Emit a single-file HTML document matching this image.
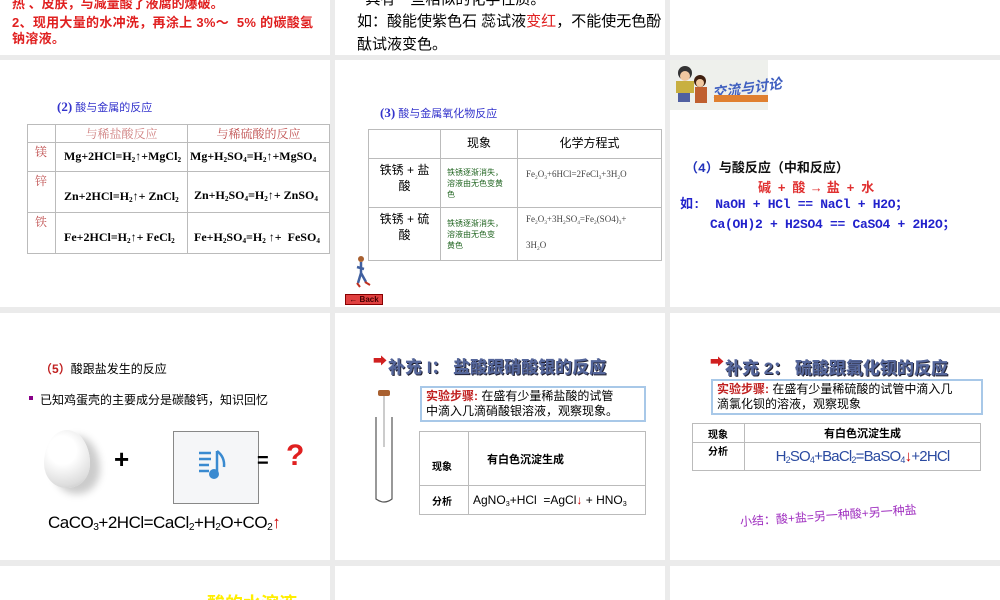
<!DOCTYPE html>
<html><head><meta charset="utf-8"><style>
*{margin:0;padding:0;box-sizing:border-box}
body{width:1000px;height:600px;background:#ebebeb;position:relative;overflow:hidden;font-family:"Liberation Sans","Noto Sans CJK SC",sans-serif}
.s{position:absolute;background:#fff;overflow:hidden}
.a{position:absolute;white-space:nowrap}
table{border-collapse:collapse;position:absolute}
td{border:1px solid #bbb}
.ser{font-family:"Liberation Serif","Noto Serif CJK SC",serif}
.mono{font-family:"Liberation Mono","Noto Sans CJK SC",monospace}
sub{font-size:60%;vertical-align:-2px}
.tt{font-weight:900;color:#55669a;font-size:17px;text-shadow:1px 1px 0 #223,-1px 0 0 #fff}
</style></head><body>
<!-- row 0 -->
<div class="s" style="left:0;top:0;width:330px;height:55px">
<div class="a" style="left:12px;top:-7px;color:#e02020;font-size:13px;font-weight:bold">热 、皮肤，与减量酸了液腐的爆破。</div>
<div class="a" style="left:12px;top:15px;color:#e02020;font-size:13px;font-weight:bold;line-height:16px;letter-spacing:0.3px">2、现用大量的水冲洗，再涂上 3%～&nbsp; 5% 的碳酸氢<br>钠溶液。</div>
</div>
<div class="s" style="left:335px;top:0;width:330px;height:55px">
<div class="a" style="left:22px;top:-12px;font-size:15px">&nbsp; 具有一些相似的化学性质。</div>
<div class="a" style="left:22px;top:10px;font-size:15px;line-height:23px">如：酸能使紫色石 蕊试液<span style="color:#e02020">变红</span>，不能使无色酚<br>酞试液变色。</div>
</div>
<div class="s" style="left:670px;top:0;width:330px;height:55px"></div>

<!-- row 1 -->
<div class="s" style="left:0;top:60px;width:330px;height:247px">
<div class="a" style="left:57px;top:39px;color:#3333cc;font-size:11px"><b style="font-size:13px" class="ser">(2)</b> 酸与金属的反应</div>
<table class="ser" style="left:27px;top:64px;width:303px;height:130px;border:1px solid #888;font-size:12px;font-weight:bold">
<tr style="height:18px"><td style="width:28px"></td><td style="width:132px;color:#d08080;font-weight:normal;text-align:center;font-size:12px">与稀盐酸反应</td><td style="color:#c05050;font-weight:normal;text-align:center;font-size:12px">与稀硫酸的反应</td></tr>
<tr><td style="color:#c05050;font-weight:normal;vertical-align:top;padding-left:7px">镁</td><td style="padding-left:8px">Mg+2HCl=H<sub>2</sub>↑+MgCl<sub>2</sub></td><td style="padding-left:2px">Mg+H<sub>2</sub>SO<sub>4</sub>=H<sub>2</sub>↑+MgSO<sub>4</sub></td></tr>
<tr><td style="color:#c05050;font-weight:normal;vertical-align:top;padding-left:7px">锌</td><td style="padding-left:8px;padding-top:10px">Zn+2HCl=H<sub>2</sub>↑+ ZnCl<sub>2</sub></td><td style="padding-left:6px;padding-top:8px">Zn+H<sub>2</sub>SO<sub>4</sub>=H<sub>2</sub>↑+ ZnSO<sub>4</sub></td></tr>
<tr><td style="color:#c05050;font-weight:normal;vertical-align:top;padding-left:7px">铁</td><td style="padding-left:8px;padding-top:10px">Fe+2HCl=H<sub>2</sub>↑+ FeCl<sub>2</sub></td><td style="padding-left:6px;padding-top:10px">Fe+H<sub>2</sub>SO<sub>4</sub>=H<sub>2</sub> ↑+&nbsp; FeSO<sub>4</sub></td></tr>
</table>
</div>
<div class="s" style="left:335px;top:60px;width:330px;height:247px">
<div class="a" style="left:45px;top:45px;color:#3333cc;font-size:11px"><b style="font-size:13px" class="ser">(3)</b> 酸与金属氧化物反应</div>
<table style="left:33px;top:69px;width:294px;height:127px;border:1px solid #888;font-size:12px">
<tr style="height:29px"><td style="width:72px"></td><td style="width:77px;text-align:center;vertical-align:top;padding-top:4px">现象</td><td style="text-align:center;vertical-align:top;padding-top:4px">化学方程式</td></tr>
<tr style="height:49px"><td style="text-align:center;vertical-align:top;line-height:16px;padding-top:3px">铁锈 + 盐<br>酸</td><td style="font-size:8px;color:#226622;padding-left:6px;line-height:11px">铁锈逐渐消失，<br>溶液由无色变黄<br>色</td><td class="ser" style="font-size:9px;color:#444;padding-left:8px;vertical-align:top;padding-top:10px">Fe<sub>2</sub>O<sub>3</sub>+6HCl=2FeCl<sub>3</sub>+3H<sub>2</sub>O</td></tr>
<tr><td style="text-align:center;vertical-align:top;line-height:16px;padding-top:3px">铁锈 + 硫<br>酸</td><td style="font-size:8px;color:#226622;padding-left:6px;line-height:11px">铁锈逐渐消失，<br>溶液由无色变<br>黄色</td><td class="ser" style="font-size:9px;color:#444;padding-left:8px;line-height:22px">Fe<sub>2</sub>O<sub>3</sub>+3H<sub>2</sub>SO<sub>4</sub>=Fe<sub>2</sub>(SO4)<sub>3</sub>+<br>3H<sub>2</sub>O</td></tr>
</table>
<svg class="a" style="left:15px;top:195px" width="22" height="34"><circle cx="11" cy="4" r="3" fill="#a86030"/><path d="M11 7 L11 18 M7 12 L14 14 M11 18 L8 28 M11 18 L16 27" stroke="#4060a0" stroke-width="2.5" fill="none"/><path d="M7 28 L10 32 M15 27 L20 30" stroke="#c03020" stroke-width="2"/></svg>
<div class="a" style="left:10px;top:234px;width:38px;height:11px;background:#e04040;border:1px solid #800;color:#400;font-size:8px;font-weight:bold;line-height:9px;text-align:center">← Back</div>
</div>
<div class="s" style="left:670px;top:60px;width:330px;height:247px">
<div class="a" style="left:0;top:0;width:98px;height:50px;background:#eef0ec"></div>
<svg class="a" style="left:2px;top:4px" width="40" height="44"><circle cx="13" cy="9" r="7" fill="#333"/><circle cx="13" cy="12" r="5" fill="#f0c8a0"/><rect x="4" y="17" width="18" height="12" fill="#c8b040"/><rect x="6" y="29" width="12" height="9" fill="#5060a0"/><circle cx="28" cy="17" r="6" fill="#402010"/><circle cx="28" cy="19" r="4" fill="#f0c8a0"/><rect x="23" y="23" width="12" height="16" fill="#c06030"/></svg>
<div class="a" style="left:42px;top:18px;font-size:14px;font-weight:bold;color:#4060c0;font-style:italic;transform:rotate(-8deg)">交流与讨论</div>
<div class="a" style="left:44px;top:35px;width:54px;height:7px;background:#e08030"></div>
<div class="a mono" style="left:15px;top:97px;font-size:13px;font-weight:bold;color:#111"><span style="color:#2233bb">（4）</span>与酸反应（中和反应）</div>
<div class="a mono" style="left:88px;top:117px;font-size:13px;font-weight:bold;color:#e03030;letter-spacing:-0.5px">碱 + 酸 → 盐 + 水</div>
<div class="a mono" style="left:10px;top:135px;font-size:13px;font-weight:bold;color:#2222cc;line-height:20px;letter-spacing:-0.3px">如:&nbsp; NaOH + HCl == NaCl + H2O；<br>&nbsp;&nbsp;&nbsp; Ca(OH)2 + H2SO4 == CaSO4 + 2H2O；</div>
</div>

<!-- row 2 -->
<div class="s" style="left:0;top:313px;width:330px;height:247px">
<div class="a" style="left:40px;top:47px;font-size:12px"><span style="color:#c02020;font-weight:bold">（5）</span>酸跟盐发生的反应</div>
<div class="a" style="left:29px;top:83px;width:4px;height:4px;background:#880088"></div>
<div class="a" style="left:40px;top:78px;font-size:12px">已知鸡蛋壳的主要成分是碳酸钙，知识回忆</div>
<div class="a" style="left:44px;top:117px;width:46px;height:58px;border-radius:50% 50% 48% 48%/58% 58% 42% 42%;background:radial-gradient(circle at 40% 35%,#fff 30%,#ddd 75%,#bbb);box-shadow:10px 6px 8px #ccc"></div>
<div class="a" style="left:114px;top:131px;font-size:26px;font-weight:bold">+</div>
<div class="a" style="left:173px;top:118px;width:86px;height:73px;border:1px solid #888;background:#f5f6f8"></div>
<svg class="a" style="left:195px;top:134px" width="40" height="40"><path d="M4 6h12M4 12h12M4 18h10M4 24h10" stroke="#3a8ad0" stroke-width="2.5"/><path d="M22 4v22" stroke="#3a8ad0" stroke-width="2.5"/><circle cx="19" cy="27" r="5" fill="#3a8ad0"/><path d="M22 4q8 6 7 16" stroke="#3a8ad0" stroke-width="2.5" fill="none"/></svg>
<div class="a" style="left:257px;top:137px;font-size:20px;font-weight:bold">=</div>
<div class="a" style="left:286px;top:126px;font-size:30px;font-weight:bold;color:#e02020">?</div>
<div class="a" style="left:48px;top:200px;font-size:17px;letter-spacing:-0.5px">CaCO<sub>3</sub>+2HCl=CaCl<sub>2</sub>+H<sub>2</sub>O+CO<sub>2</sub><span style="color:#c00">↑</span></div>
</div>
<div class="s" style="left:335px;top:313px;width:330px;height:247px">
<div class="a" style="left:38px;top:38px;color:#d02020;font-size:14px">➡</div>
<div class="a tt" style="left:53px;top:40px">补充 I： 盐酸跟硝酸银的反应</div>
<svg class="a" style="left:38px;top:74px" width="22" height="120"><rect x="5" y="3" width="12" height="6" rx="2" fill="#a86030"/><path d="M11 9 L11 60" stroke="#999" stroke-width="1"/><path d="M3 30 V112 Q11 118 19 112 V30" stroke="#555" stroke-width="1.2" fill="none"/></svg>
<div class="a" style="left:85px;top:73px;width:226px;height:36px;border:2px solid #a8c8e8;font-size:12px;line-height:15px;padding:1px 4px"><b style="color:#c02020">实验步骤:</b> 在盛有少量稀盐酸的试管<br>中滴入几滴硝酸银溶液，观察现象。</div>
<table style="left:84px;top:118px;width:227px;height:84px;border:1px solid #888">
<tr><td style="width:49px;font-size:10px;font-weight:bold;padding:14px 0 0 12px">现象</td><td style="font-size:11px;font-weight:bold;padding-left:18px">有白色沉淀生成</td></tr>
<tr><td style="font-size:10px;font-weight:bold;padding-left:12px">分析</td><td style="font-size:12px;padding-left:4px">AgNO<sub>3</sub>+HCl&nbsp; =AgCl<span style="color:#c00">↓</span> + HNO<sub>3</sub></td></tr>
</table>
</div>
<div class="s" style="left:670px;top:313px;width:330px;height:247px">
<div class="a" style="left:40px;top:39px;color:#d02020;font-size:14px">➡</div>
<div class="a tt" style="left:55px;top:41px">补充 2： 硫酸跟氯化钡的反应</div>
<div class="a" style="left:41px;top:66px;width:272px;height:36px;border:2px solid #a8c8e8;font-size:12px;line-height:15px;padding:1px 4px"><b style="color:#c02020">实验步骤:</b> 在盛有少量稀硫酸的试管中滴入几<br>滴氯化钡的溶液，观察现象</div>
<table style="left:22px;top:110px;width:289px;height:48px;border:1px solid #888">
<tr style="height:19px"><td style="width:52px;font-size:10px;font-weight:bold;padding-left:15px">现象</td><td style="font-size:11px;font-weight:bold;text-align:center">有白色沉淀生成</td></tr>
<tr><td style="font-size:10px;font-weight:bold;padding-left:15px;vertical-align:top">分析</td><td style="font-size:15px;color:#2a4aa0;text-align:center;letter-spacing:-0.8px">H<sub>2</sub>SO<sub>4</sub>+BaCl<sub>2</sub>=BaSO<sub>4</sub><span style="color:#c00">↓</span>+2HCl</td></tr>
</table>
<div class="a" style="left:70px;top:200px;font-size:12px;color:#a030c0;transform:rotate(-4deg);transform-origin:left">小结：酸+盐=另一种酸+另一种盐</div>
</div>

<!-- row 3 -->
<div class="s" style="left:0;top:566px;width:330px;height:34px"><div class="a" style="left:207px;top:24px;font-size:18px;font-weight:bold;color:#ffee00">酸的水溶液</div></div>
<div class="s" style="left:335px;top:566px;width:330px;height:34px"></div>
<div class="s" style="left:670px;top:566px;width:330px;height:34px"></div>
</body></html>
